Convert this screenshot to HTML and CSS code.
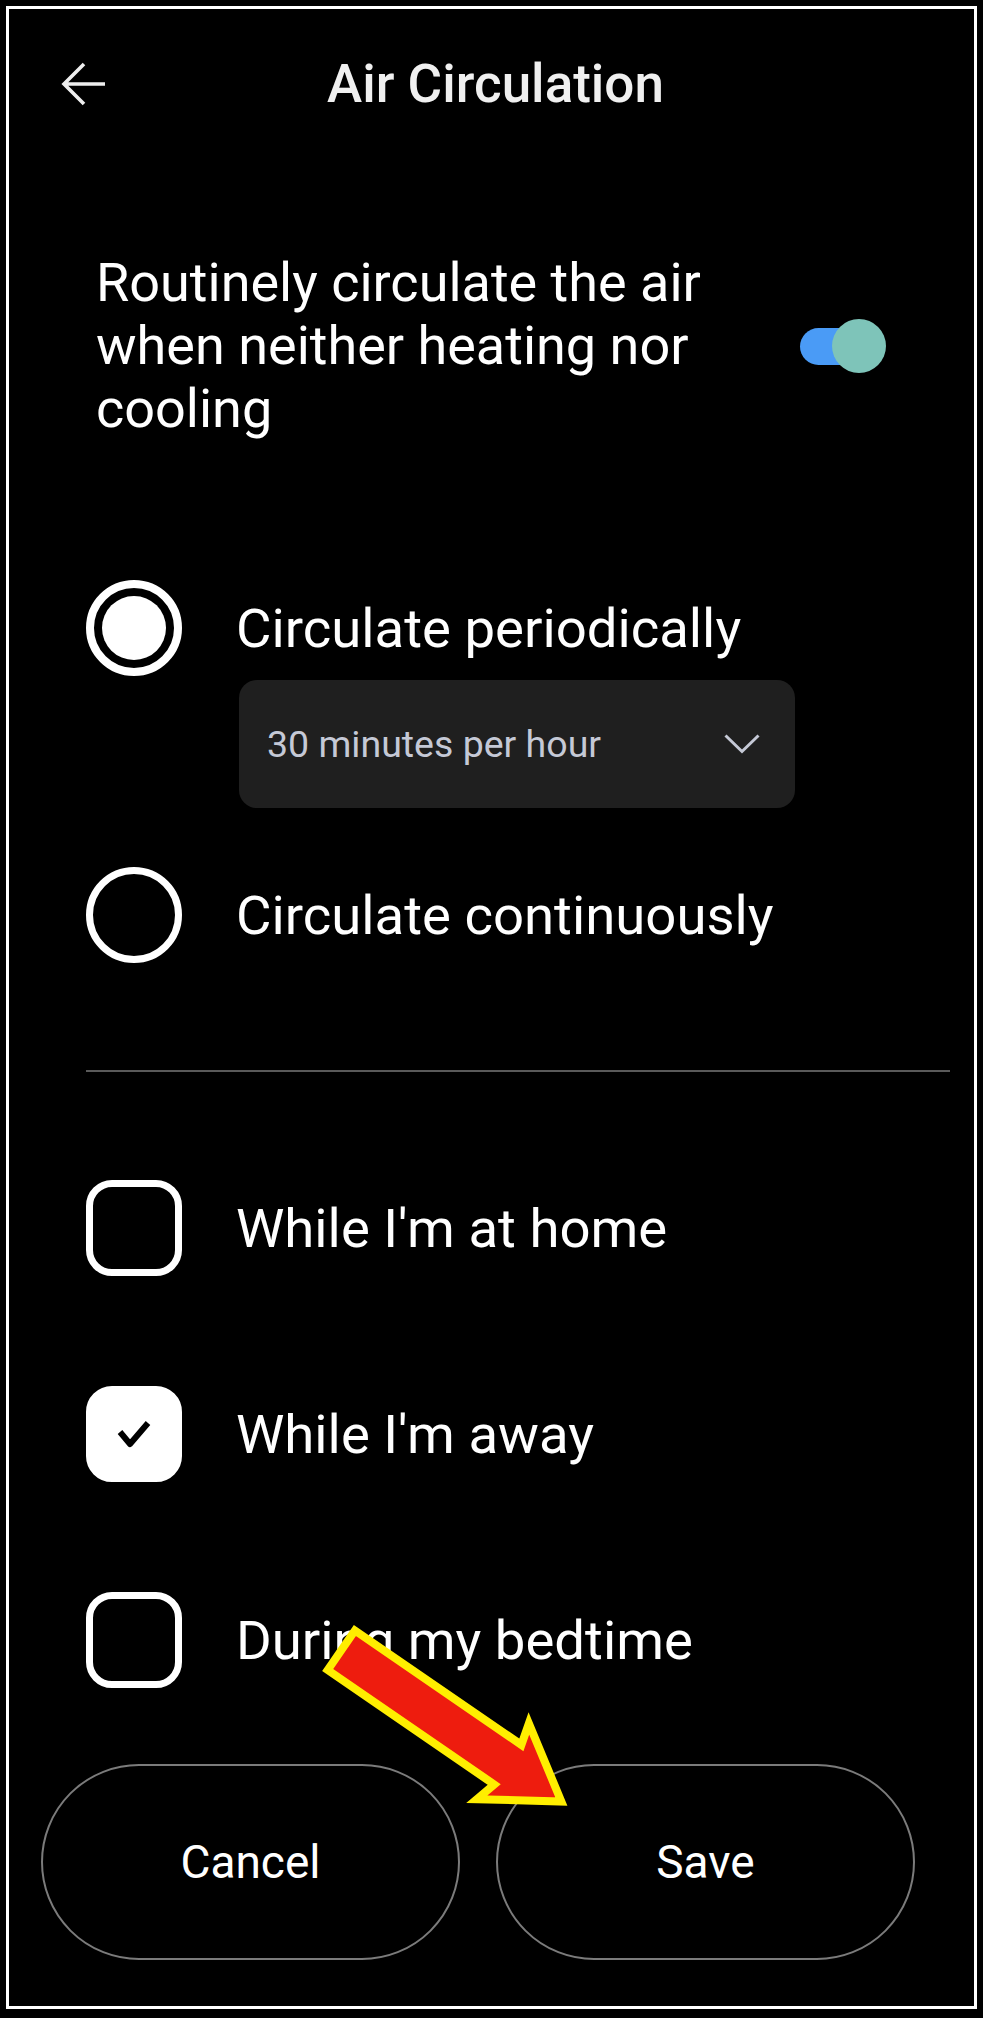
FILE: index.html
```html
<!DOCTYPE html>
<html lang="en">
<head>
  <meta charset="UTF-8" />
  <meta name="viewport" content="width=device-width, initial-scale=1" />
  <title>Air Circulation</title>
  <link rel="stylesheet" href="styles.css">
</head>
<body>
  <div class="frame">
    <header class="top-bar">
      <button class="back-btn" aria-label="Back">
        <svg width="46" height="46" viewBox="0 0 46 46">
          <path d="M44 23 H4 M23 3 L3 23 L23 43" fill="none" stroke="#eeeeee" stroke-width="3.6" />
        </svg>
      </button>
      <h1 class="title">Air Circulation</h1>
      <span></span>
    </header>

    <div class="toggle-row">
      <p class="toggle-text">Routinely circulate the air when neither heating nor cooling</p>
      <div class="toggle">
        <span class="track"></span>
        <span class="thumb"></span>
      </div>
    </div>

    <div class="option first-radio">
      <span class="radio selected"><span class="dot"></span></span>
      <span class="label">Circulate periodically</span>
    </div>

    <div class="select">
      <span>30 minutes per hour</span>
      <svg width="36" height="20" viewBox="0 0 36 20">
        <path d="M1.5 1.5 L18 17.5 L34.5 1.5" fill="none" stroke="#c5c9d6" stroke-width="3" />
      </svg>
    </div>

    <div class="option second-radio">
      <span class="radio"></span>
      <span class="label">Circulate continuously</span>
    </div>

    <hr class="divider">

    <div class="checks">
      <div class="option">
        <span class="box"></span>
        <span class="label">While I'm at home</span>
      </div>
      <div class="option">
        <span class="box checked">
          <svg width="36" height="30" viewBox="0 0 36 30">
            <path d="M4 13 L14 25 L32 4" fill="none" stroke="#000" stroke-width="6" stroke-linejoin="round" />
          </svg>
        </span>
        <span class="label">While I'm away</span>
      </div>
      <div class="option">
        <span class="box"></span>
        <span class="label">During my bedtime</span>
      </div>
    </div>

    <div class="actions">
      <button class="pill">Cancel</button>
      <button class="pill">Save</button>
    </div>

    <!-- annotation arrow drawn over the screenshot -->
    <svg class="pointer" width="300" height="240" viewBox="0 0 300 240">
      <g transform="translate(38 48) rotate(34.5)">
        <polygon points="4,-24 206,-24 200,-46 271,0 200,46 206,24 4,24" fill="#ee1c0e" stroke="#ffee00" stroke-width="8" />
      </g>
    </svg>
  </div>
</body>
</html>
```

FILE: styles.css
```css
body {
  margin: 0;
  background: #000;
  font-family: Roboto, 'Liberation Sans', sans-serif;
  color: #fff;
}

.frame {
  position: relative;
  margin: 6px;
  width: 971px;
  height: 2003px;
  box-sizing: border-box;
  border: 3px solid #fff;
  background: #000;
}

.top-bar {
  display: grid;
  grid-template-columns: 1fr auto 1fr;
  align-items: center;
  height: 150px;
}

.back-btn {
  justify-self: start;
  margin-left: 52px;
  padding: 0;
  border: none;
  background: none;
  display: flex;
}

.title {
  margin: 0;
  font-size: 53px;
  font-weight: 500;
  color: #f0f0f0;
  padding-left: 8px;
}

.toggle-row {
  display: flex;
  align-items: center;
  padding-left: 87px;
  margin-top: 92px;
}

.toggle-text {
  margin: 0;
  width: 640px;
  font-size: 54px;
  line-height: 63px;
}

.toggle {
  position: relative;
  margin-left: 64px;
  width: 86px;
  height: 54px;
}

.track {
  position: absolute;
  left: 0;
  top: 9px;
  width: 70px;
  height: 37px;
  border-radius: 19px;
  background: #4a9bf6;
}

.thumb {
  position: absolute;
  right: 0;
  top: 0;
  width: 54px;
  height: 54px;
  border-radius: 50%;
  background: #7ec4b9;
}

.option {
  display: flex;
  align-items: center;
  gap: 54px;
  padding-left: 77px;
}

.label {
  font-size: 54.5px;
  line-height: 63px;
}

.first-radio {
  margin-top: 140px;
}

.second-radio {
  margin-top: 59px;
}

.radio {
  width: 96px;
  height: 96px;
  box-sizing: border-box;
  border: 7px solid #fff;
  border-radius: 50%;
  display: flex;
  align-items: center;
  justify-content: center;
  flex-shrink: 0;
}

.radio.selected {
  border-width: 8px;
}

.dot {
  width: 64px;
  height: 64px;
  border-radius: 50%;
  background: #fff;
}

.select {
  display: flex;
  align-items: center;
  justify-content: space-between;
  margin: 4px 0 0 230px;
  width: 556px;
  height: 128px;
  box-sizing: border-box;
  padding: 0 35px 0 28px;
  border-radius: 18px;
  background: #1f1f1f;
  color: #c5c9d6;
  font-size: 37.5px;
}

.divider {
  margin: 107px 0 0 77px;
  width: 864px;
  height: 2px;
  border: none;
  background: #5a5a5a;
}

.checks {
  display: flex;
  flex-direction: column;
  gap: 110px;
  margin-top: 108px;
}

.box {
  width: 96px;
  height: 96px;
  box-sizing: border-box;
  border: 7px solid #fff;
  border-radius: 26px;
  display: flex;
  align-items: center;
  justify-content: center;
  flex-shrink: 0;
}

.box.checked {
  background: #fff;
}

.actions {
  display: flex;
  gap: 36px;
  margin: 76px 0 0 32px;
}

.pill {
  width: 419px;
  height: 196px;
  border: 2px solid #7b7b7b;
  border-radius: 98px;
  background: #000;
  color: #fff;
  font-family: Roboto, 'Liberation Sans', sans-serif;
  font-size: 46px;
}

.pointer {
  position: absolute;
  left: 291px;
  top: 1591px;
  pointer-events: none;
}
```
